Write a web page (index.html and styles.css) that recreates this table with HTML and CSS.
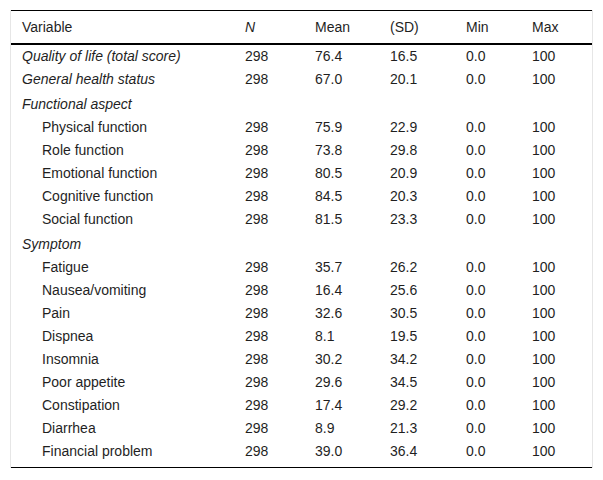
FILE: index.html
```html
<!DOCTYPE html>
<html>
<head>
<meta charset="utf-8">
<link rel="stylesheet" href="styles.css">
</head>
<body>
<div class="wrap">
<table class="stats">
<colgroup>
<col class="c-var"><col class="c-n"><col class="c-mean"><col class="c-sd"><col class="c-min"><col class="c-max">
</colgroup>
<thead>
<tr><th>Variable</th><th><i>N</i></th><th>Mean</th><th>(SD)</th><th>Min</th><th>Max</th></tr>
</thead>
<tbody>
<tr><td><i>Quality of life (total score)</i></td><td>298</td><td>76.4</td><td>16.5</td><td>0.0</td><td>100</td></tr>
<tr><td><i>General health status</i></td><td>298</td><td>67.0</td><td>20.1</td><td>0.0</td><td>100</td></tr>
<tr class="section"><td><i>Functional aspect</i></td><td></td><td></td><td></td><td></td><td></td></tr>
<tr><td class="ind">Physical function</td><td>298</td><td>75.9</td><td>22.9</td><td>0.0</td><td>100</td></tr>
<tr><td class="ind">Role function</td><td>298</td><td>73.8</td><td>29.8</td><td>0.0</td><td>100</td></tr>
<tr><td class="ind">Emotional function</td><td>298</td><td>80.5</td><td>20.9</td><td>0.0</td><td>100</td></tr>
<tr><td class="ind">Cognitive function</td><td>298</td><td>84.5</td><td>20.3</td><td>0.0</td><td>100</td></tr>
<tr><td class="ind">Social function</td><td>298</td><td>81.5</td><td>23.3</td><td>0.0</td><td>100</td></tr>
<tr class="section"><td><i>Symptom</i></td><td></td><td></td><td></td><td></td><td></td></tr>
<tr><td class="ind">Fatigue</td><td>298</td><td>35.7</td><td>26.2</td><td>0.0</td><td>100</td></tr>
<tr><td class="ind">Nausea/vomiting</td><td>298</td><td>16.4</td><td>25.6</td><td>0.0</td><td>100</td></tr>
<tr><td class="ind">Pain</td><td>298</td><td>32.6</td><td>30.5</td><td>0.0</td><td>100</td></tr>
<tr><td class="ind">Dispnea</td><td>298</td><td>8.1</td><td>19.5</td><td>0.0</td><td>100</td></tr>
<tr><td class="ind">Insomnia</td><td>298</td><td>30.2</td><td>34.2</td><td>0.0</td><td>100</td></tr>
<tr><td class="ind">Poor appetite</td><td>298</td><td>29.6</td><td>34.5</td><td>0.0</td><td>100</td></tr>
<tr><td class="ind">Constipation</td><td>298</td><td>17.4</td><td>29.2</td><td>0.0</td><td>100</td></tr>
<tr><td class="ind">Diarrhea</td><td>298</td><td>8.9</td><td>21.3</td><td>0.0</td><td>100</td></tr>
<tr class="last"><td class="ind">Financial problem</td><td>298</td><td>39.0</td><td>36.4</td><td>0.0</td><td>100</td></tr>
</tbody>
</table>
</div>
</body>
</html>
```

FILE: styles.css
```css
html, body {
  margin: 0;
  padding: 0;
  background: #ffffff;
}
body {
  font-family: "Liberation Sans", Arial, sans-serif;
  font-size: 14px;
  color: #1f1f1f;
}
.wrap {
  margin: 10px 0 0 10px;
  width: 581px;
  border-left: 1px solid #e6e6e6;
  border-right: 1px solid #e6e6e6;
}
.stats {
  width: 581px;
  border-collapse: collapse;
  table-layout: fixed;
  border-top: 1px solid #000;
  border-bottom: 1px solid #000;
}
.c-var { width: 223px; }
.c-n { width: 70px; }
.c-mean { width: 75px; }
.c-sd { width: 76px; }
.c-min { width: 66px; }
.c-max { width: 71px; }
.stats th {
  font-weight: normal;
  text-align: left;
  padding: 0 0 0 11px;
  height: 32px;
  line-height: 16px;
  vertical-align: middle;
  border-bottom: 2px solid #000;
}
.stats td {
  padding: 0 0 0 11px;
  line-height: 23px;
  height: 23px;
  vertical-align: top;
  white-space: nowrap;
}
.stats tr.section td {
  padding-top: 2px;
}
.stats tr.last td {
  padding-bottom: 4px;
}
.stats td.ind {
  padding-left: 31px;
}
```
